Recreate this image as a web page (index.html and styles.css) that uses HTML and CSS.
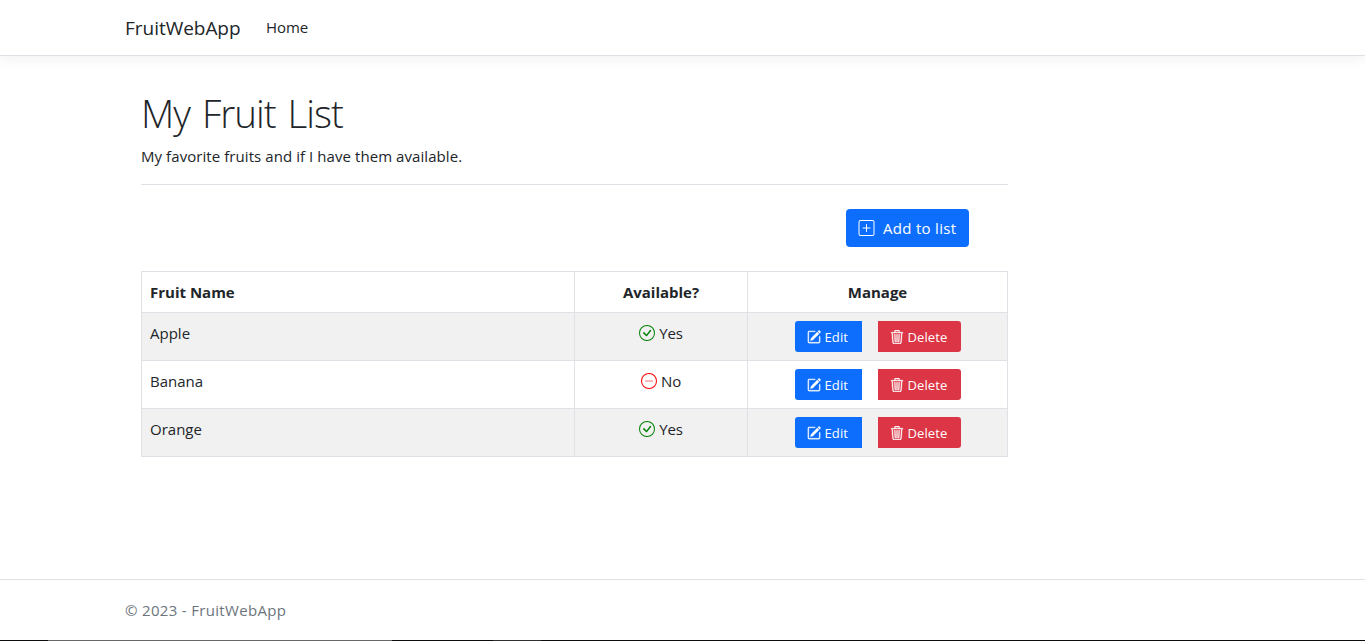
FILE: index.html
```html
<!DOCTYPE html>
<html lang="en">
<head>
<meta charset="utf-8">
<title>My Fruit List - FruitWebApp</title>
<link rel="stylesheet" href="styles.css">
</head>
<body>
<svg class="sprite" aria-hidden="true">
  <symbol id="plus-square" viewBox="0 0 16 16">
    <path d="M14 1a1 1 0 0 1 1 1v12a1 1 0 0 1-1 1H2a1 1 0 0 1-1-1V2a1 1 0 0 1 1-1h12zM2 0a2 2 0 0 0-2 2v12a2 2 0 0 0 2 2h12a2 2 0 0 0 2-2V2a2 2 0 0 0-2-2H2z"/>
    <path d="M8 4a.5.5 0 0 1 .5.5v3h3a.5.5 0 0 1 0 1h-3v3a.5.5 0 0 1-1 0v-3h-3a.5.5 0 0 1 0-1h3v-3A.5.5 0 0 1 8 4z"/>
  </symbol>
  <symbol id="check-circle" viewBox="0 0 16 16">
    <path d="M8 15A7 7 0 1 1 8 1a7 7 0 0 1 0 14zm0 1A8 8 0 1 0 8 0a8 8 0 0 0 0 16z"/>
    <path d="M10.97 4.97a.235.235 0 0 0-.02.022L7.477 9.417 5.384 7.323a.75.75 0 0 0-1.06 1.06L6.97 11.03a.75.75 0 0 0 1.079-.02l3.992-4.99a.75.75 0 0 0-1.071-1.05z"/>
  </symbol>
  <symbol id="dash-circle" viewBox="0 0 16 16">
    <path d="M8 15A7 7 0 1 1 8 1a7 7 0 0 1 0 14zm0 1A8 8 0 1 0 8 0a8 8 0 0 0 0 16z"/>
    <path opacity=".55" d="M4 8a.5.5 0 0 1 .5-.5h7a.5.5 0 0 1 0 1h-7A.5.5 0 0 1 4 8z"/>
  </symbol>
  <symbol id="pencil-square" viewBox="0 0 16 16">
    <path d="M15.502 1.94a.5.5 0 0 1 0 .706L14.459 3.69l-2-2L13.502.646a.5.5 0 0 1 .707 0l1.293 1.293zm-1.75 2.456-2-2L4.939 9.21a.5.5 0 0 0-.121.196l-.805 2.414a.25.25 0 0 0 .316.316l2.414-.805a.5.5 0 0 0 .196-.12l6.813-6.814z"/>
    <path fill-rule="evenodd" d="M1 13.5A1.5 1.5 0 0 0 2.5 15h11a1.5 1.5 0 0 0 1.5-1.5v-6a.5.5 0 0 0-1 0v6a.5.5 0 0 1-.5.5h-11a.5.5 0 0 1-.5-.5v-11a.5.5 0 0 1 .5-.5H9a.5.5 0 0 0 0-1H2.5A1.5 1.5 0 0 0 1 2.500v11z"/>
  </symbol>
  <symbol id="trash" viewBox="0 0 16 16">
    <path d="M6.500 1h3a.5.5 0 0 1 .5.5v1H6v-1a.5.5 0 0 1 .5-.5ZM11 2.500v-1A1.500 1.500 0 0 0 9.500 0h-3A1.500 1.500 0 0 0 5 1.500v1H2.506a.58.58 0 0 0-.01 0H1.500a.5.5 0 0 0 0 1h.538l.853 10.660A2 2 0 0 0 4.885 16h6.230a2 2 0 0 0 1.994-1.840l.853-10.660h.538a.5.5 0 0 0 0-1h-.995a.59.59 0 0 0-.01 0H11Zm1.958 1-.846 10.580a1 1 0 0 1-.997.920h-6.230a1 1 0 0 1-.997-.920L3.042 3.500h9.916Zm-7.487 1a.5.5 0 0 1 .528.470l.5 8.500a.5.5 0 0 1-.998.060L5 5.030a.5.5 0 0 1 .470-.530Zm5.058 0a.5.5 0 0 1 .470.530l-.5 8.500a.5.5 0 1 1-.998-.060l.5-8.500a.5.5 0 0 1 .528-.470ZM8 4.500a.5.5 0 0 1 .5.5v8.500a.5.5 0 0 1-1 0V5a.5.5 0 0 1 .5-.5Z"/>
  </symbol>
</svg>
<header class="navbar">
  <a class="brand">FruitWebApp</a>
  <a class="nav-link">Home</a>
</header>
<main class="content">
  <h1 class="title">My Fruit List</h1>
  <p class="lead">My favorite fruits and if I have them available.</p>
  <div class="toolbar">
    <a class="btn btn-add"><svg class="icon icon-add"><use href="#plus-square"/></svg><span>Add to list</span></a>
  </div>
  <table class="fruits">
    <colgroup><col class="col-name"><col class="col-available"><col class="col-manage"></colgroup>
    <thead>
      <tr><th>Fruit Name</th><th class="center">Available?</th><th class="center">Manage</th></tr>
    </thead>
    <tbody>
      <tr>
        <td>Apple</td>
        <td><div class="status"><svg class="icon icon-yes"><use href="#check-circle"/></svg><span>Yes</span></div></td>
        <td><div class="actions"><a class="btn btn-edit"><svg class="icon"><use href="#pencil-square"/></svg><span>Edit</span></a><a class="btn btn-delete"><svg class="icon"><use href="#trash"/></svg><span>Delete</span></a></div></td>
      </tr>
      <tr>
        <td>Banana</td>
        <td><div class="status"><svg class="icon icon-no"><use href="#dash-circle"/></svg><span>No</span></div></td>
        <td><div class="actions"><a class="btn btn-edit"><svg class="icon"><use href="#pencil-square"/></svg><span>Edit</span></a><a class="btn btn-delete"><svg class="icon"><use href="#trash"/></svg><span>Delete</span></a></div></td>
      </tr>
      <tr>
        <td>Orange</td>
        <td><div class="status"><svg class="icon icon-yes"><use href="#check-circle"/></svg><span>Yes</span></div></td>
        <td><div class="actions"><a class="btn btn-edit"><svg class="icon"><use href="#pencil-square"/></svg><span>Edit</span></a><a class="btn btn-delete"><svg class="icon"><use href="#trash"/></svg><span>Delete</span></a></div></td>
      </tr>
    </tbody>
  </table>
</main>
<footer class="footer"><span>© 2023 - FruitWebApp</span></footer>
<div class="edge"></div>
</body>
</html>
```
FILE: styles.css
```css
* { box-sizing: border-box; }
body {
  margin: 0;
  height: 641px;
  display: flex;
  flex-direction: column;
  overflow: hidden;
  background: #fff;
  color: #212529;
  font: 15px/24px "Open Sans", "Noto Sans", sans-serif;
}
.sprite { display: none; }
.navbar {
  flex: none;
  height: 56px;
  padding: 0 125px;
  display: flex;
  align-items: center;
  gap: 24px;
  border-bottom: 1px solid #dee2e6;
  box-shadow: 0 4px 12px rgba(0, 0, 0, .05);
}
.brand { font-size: 19px; width: 117px; white-space: nowrap; letter-spacing: -.03px; }
.nav-link { letter-spacing: -.1px; padding-bottom: 2px; }
.content { width: 867px; margin-left: 141px; flex: 1; }
.title {
  margin: 33px 0 7px;
  font-size: 38.500px;
  font-weight: 300;
  line-height: 48px;
  letter-spacing: -1px;
  word-spacing: 3px;
  white-space: nowrap;
}
.lead { margin: 0; padding-bottom: 16px; height: 41px; border-bottom: 1px solid #dee2e6; letter-spacing: .07px; white-space: nowrap; }
.toolbar { display: flex; justify-content: flex-end; padding: 24px 39px; }
.btn { display: flex; align-items: center; color: #fff; white-space: nowrap; }
.icon { width: 14px; height: 14px; fill: currentColor; flex: none; }
.btn-add { width: 123px; height: 38px; padding-left: 12px; gap: 8px; border-radius: 4px; background: #0d6efd; letter-spacing: .3px; }
.icon-add { width: 17px; height: 16px; }
.fruits { width: 867px; table-layout: fixed; border-collapse: collapse; }
.col-name { width: 433px; }
.col-available { width: 173px; }
.col-manage { width: 260px; }
.fruits th, .fruits td { border: 1px solid #dee2e6; padding: 8px; vertical-align: top; text-align: left; }
.fruits th { height: 41px; font-weight: 700; }
.fruits td { height: 48px; }
.fruits .center { text-align: center; }
.fruits tbody tr:nth-child(odd) { background: #f1f1f1; }
.status { display: flex; justify-content: center; align-items: center; gap: 4px; }
.status .icon { width: 16px; height: 16px; }
.status span { letter-spacing: -.1px; }
.icon-yes { color: green; }
.icon-no { color: red; }
.actions { display: flex; justify-content: center; gap: 16px; }
.actions .btn { height: 31px; font-size: 13px; gap: 4px; padding-left: 12px; letter-spacing: .1px; }
.actions .icon { stroke: currentColor; stroke-width: .4px; }
.btn-edit { width: 67px; background: #0d6efd; border-radius: 3px 0 0 3px; }
.btn-delete { width: 83px; background: #dc3545; border-radius: 0 3px 3px 0; }
.footer { flex: none; height: 61px; padding: 18px 125px; border-top: 1px solid #dee2e6; color: #6c757d; letter-spacing: .32px; }
.edge {
  flex: none;
  height: 1px;
  background: linear-gradient(90deg, #0c0c0c 48px, #686868 48px 392px, #0c0c0c 392px 493px, #303030 493px 541px, #0c0c0c 541px);
}
```
